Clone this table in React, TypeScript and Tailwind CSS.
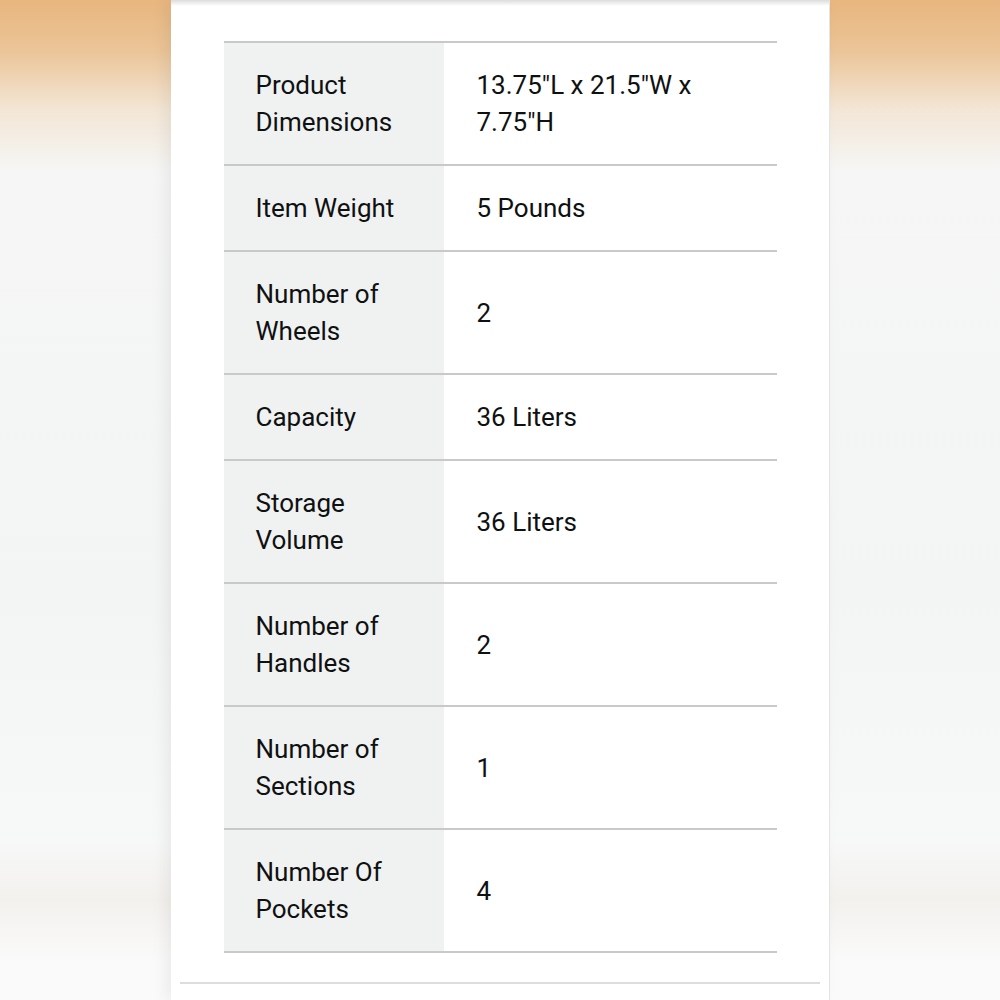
const rows = [
  { label: 'Product Dimensions', value: '13.75"L x 21.5"W x 7.75"H' },
  { label: 'Item Weight', value: '5 Pounds' },
  { label: 'Number of Wheels', value: '2' },
  { label: 'Capacity', value: '36 Liters' },
  { label: 'Storage Volume', value: '36 Liters' },
  { label: 'Number of Handles', value: '2' },
  { label: 'Number of Sections', value: '1' },
  { label: 'Number Of Pockets', value: '4' },
]

export default function App() {
  return (
    <div className="w-[1000px] h-[1000px] overflow-hidden flex justify-center bg-[linear-gradient(180deg,#e8b67f_0px,#ebc497_50px,#f3e6d6_110px,#f5f6f5_170px,#f3f5f5_600px,#f7f8f8_840px,#f3f1ee_900px,#fafafa_960px)]">
      <div className="relative w-[659px] h-full bg-white shadow-[-6px_0_14px_rgba(0,0,0,0.06)] border-r border-[#e4e4e4] flex flex-col">
        {/* header shadow from above */}
        <div className="h-[6px] bg-[linear-gradient(180deg,#dcdcdc,#ffffff)]" />

        <div className="pt-[35px] pl-[53px] pr-[52px]">
          <table
            className="w-full border-collapse text-[#0f1111] text-[26px] leading-[37px]"
            style={{ fontFamily: 'Roboto, "Noto Sans", Arial, sans-serif' }}
          >
            <tbody>
              {rows.map((r, i) => (
                <tr key={i} className={`border-b-2 border-[#c9c9c9] ${i === 0 ? 'border-t-2' : ''}`}>
                  <th className="w-[220px] bg-[#f0f2f2] text-left font-normal align-middle pl-[32px] pr-[30px] pt-[24px] pb-[23px]">
                    {r.label}
                  </th>
                  <td className="align-middle pl-[33px] pr-[40px] pt-[24px] pb-[23px]">{r.value}</td>
                </tr>
              ))}
            </tbody>
          </table>
        </div>

        <div className="mt-[29px] mx-[9px] h-[2px] bg-[#dddddd]" />
      </div>
    </div>
  )
}
